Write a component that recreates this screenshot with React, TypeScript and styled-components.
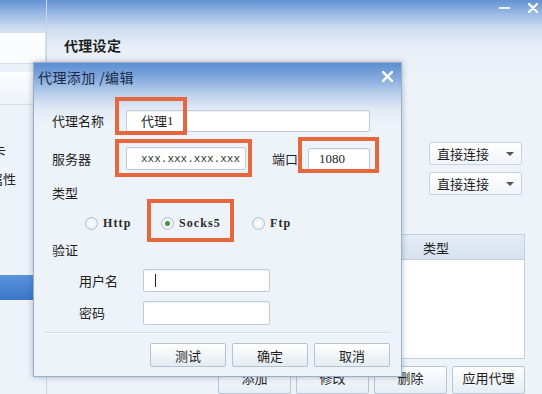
import styled, { createGlobalStyle } from "styled-components";

const GlobalStyle = createGlobalStyle`
	html, body {
		margin: 0;
		padding: 0;
		overflow: hidden;
	}

	body {
		font-family: "Noto Sans CJK SC", "Noto Sans", sans-serif;
		color: #1e1e1e;
	}
`;

const ORANGE = "#e6673b";

const Window = styled.div`
	position: relative;
	width: 542px;
	height: 394px;
	overflow: hidden;
	display: flex;
	background: linear-gradient(
		180deg,
		#6391d2 0px,
		#94b5e2 12px,
		#cddcf0 28px,
		#e8eef7 46px,
		#eef3f9 80px
	);
`;

const WindowControls = styled.div`
	position: absolute;
	top: 0;
	right: 4px;
	display: flex;
	align-items: center;
	gap: 18px;
	height: 16px;
`;

const Minimize = styled.span`
	width: 11px;
	height: 2px;
	background: #ffffff;
	opacity: 0.85;
`;

const CloseGlyph = styled.svg`
	width: ${({ width }) => width}px;
	height: ${({ height }) => height}px;
`;

/* ---------- sidebar ---------- */

const Sidebar = styled.div`
	width: 47px;
	flex-shrink: 0;
	padding-top: 32px;
	display: flex;
	flex-direction: column;
	border-right: 1px solid #c9d5e3;
	box-sizing: border-box;
	overflow: hidden;
`;

const SideHead = styled.div`
	height: 30px;
	background: #fafcfe;
	border: 1px solid #d6e0eb;
	border-left: none;
`;

const SideTab = styled.div`
	height: 32px;
	margin-top: 8px;
	background: linear-gradient(180deg, #fbfdff, #eef3f9);
	border-bottom: 1px solid #d6e0eb;
`;

const SideText = styled.div<{ $indent: number; $top: number }>`
	margin-top: ${({ $top }) => $top}px;
	margin-left: ${({ $indent }) => $indent}px;
	font-size: 13px;
	line-height: 16px;
	white-space: nowrap;
	color: #222;
`;

const SideSelected = styled.div`
	margin-top: 88px;
	height: 25px;
	background: linear-gradient(180deg, #5b93dc, #3a76c9);
`;

/* ---------- main panel ---------- */

const Main = styled.div`
	flex: 1;
	display: flex;
	flex-direction: column;
	padding: 37px 17px 0 17px;
`;

const Heading = styled.div`
	font-size: 14px;
	font-weight: bold;
	line-height: 17px;
	letter-spacing: 0.3px;
`;

const DropStack = styled.div`
	margin-top: 88px;
	display: flex;
	flex-direction: column;
	align-items: flex-end;
	gap: 7px;
	padding-right: 3px;
`;

const Dropdown = styled.div`
	width: 93px;
	height: 23px;
	box-sizing: border-box;
	display: flex;
	align-items: center;
	justify-content: space-between;
	padding: 0 7px 0 7px;
	font-size: 13px;
	background: linear-gradient(180deg, #ffffff, #f1f4f8);
	border: 1px solid #c9d2de;
	border-radius: 2px;
`;

const Caret = styled.span`
	width: 0;
	height: 0;
	border-left: 4px solid transparent;
	border-right: 4px solid transparent;
	border-top: 4px solid #555;
`;

const Table = styled.div`
	margin-top: 39px;
	height: 132px;
	display: flex;
	flex-direction: column;
	background: #ffffff;
	border: 1px solid #c3cfdd;
	box-sizing: border-box;
`;

const TableHead = styled.div`
	height: 24px;
	display: flex;
	justify-content: flex-end;
	align-items: center;
	background: linear-gradient(180deg, #e4ecf6, #d7e2ef);
	border-bottom: 1px solid #c3cfdd;
	font-size: 13px;
`;

const HeadCell = styled.div`
	width: 123px;
	padding-left: 22px;
	box-sizing: border-box;
`;

const ActionRow = styled.div`
	margin-top: 7px;
	display: flex;
	justify-content: flex-end;
	gap: 5px;
`;

const ActionButton = styled.div`
	width: 73px;
	height: 28px;
	box-sizing: border-box;
	padding-top: 1px;
	text-align: center;
	font-size: 13px;
	background: linear-gradient(180deg, #fdfeff, #e7edf4);
	border: 1px solid #b9c5d3;
	border-radius: 2px;
`;

/* ---------- dialog ---------- */

const Dialog = styled.div`
	position: absolute;
	left: 33px;
	top: 62px;
	width: 369px;
	height: 315px;
	box-sizing: border-box;
	display: flex;
	flex-direction: column;
	border: 1px solid #98afc9;
	box-shadow: 0 0 6px rgba(40, 60, 90, 0.35);
	background: linear-gradient(
		180deg,
		#5c8ed1 0px,
		#81a7dc 14px,
		#b7cdeb 30px,
		#e2eaf6 46px,
		#eef3f9 62px
	);
`;

const DialogTitle = styled.div`
	height: 31px;
	box-sizing: border-box;
	display: flex;
	align-items: center;
	justify-content: space-between;
	padding: 0 8px 4px 4px;
	font-size: 14px;
	color: #1b2b47;
	letter-spacing: 0.4px;
`;

const DialogBody = styled.div`
	display: flex;
	flex-direction: column;
	padding: 0 11px 0 18px;
`;

const Row = styled.div<{ $top: number; $indent?: number }>`
	display: flex;
	align-items: center;
	margin-top: ${({ $top }) => $top}px;
	padding-left: ${({ $indent }) => $indent || 0}px;
`;

const Label = styled.div<{ $width?: number }>`
	width: ${({ $width }) => ($width ? `${$width}px` : "auto")};
	flex-shrink: 0;
	font-size: 13px;
	line-height: 16px;
	white-space: nowrap;
`;

const PortLabel = styled(Label)`
	margin-left: 26px;
	width: 36px;
`;

const Input = styled.div<{ $width: number; $height?: number; $pad?: number }>`
	width: ${({ $width }) => $width}px;
	height: ${({ $height }) => $height || 23}px;
	box-sizing: border-box;
	display: flex;
	align-items: center;
	padding-left: ${({ $pad }) => $pad ?? 14}px;
	background: #ffffff;
	border: 1px solid #bfcbd9;
	border-radius: 2px;
	box-shadow: inset 0 1px 1px rgba(0, 0, 0, 0.06);
	font-size: 13px;
	line-height: 16px;
`;

const SerifNum = styled.span`
	font-family: "Liberation Serif", "DejaVu Serif", serif;
	font-size: 13px;
	line-height: 16px;
	color: #222;
`;

const MonoText = styled.span`
	font-family: "Liberation Mono", "DejaVu Sans Mono", monospace;
	font-size: 11px;
	line-height: 14px;
	color: #333;
`;

const TextCursor = styled.span`
	width: 1px;
	height: 13px;
	background: #222;
	margin-left: -3px;
`;

const RadioGroup = styled.div`
	display: flex;
	align-items: center;
	height: 14px;
	padding-left: 33px;
`;

const RadioItem = styled.div<{ $width: number }>`
	width: ${({ $width }) => $width}px;
	height: 14px;
	display: flex;
	align-items: center;
	gap: 5px;
`;

const RadioDot = styled.span<{ $checked?: boolean }>`
	width: 13px;
	height: 13px;
	box-sizing: border-box;
	border-radius: 50%;
	border: 1px solid #b3bfcc;
	background: radial-gradient(circle, #ffffff 0%, #e3e8ef 100%);
	display: flex;
	align-items: center;
	justify-content: center;

	&::after {
		content: "";
		display: ${({ $checked }) => ($checked ? "block" : "none")};
		width: 5px;
		height: 5px;
		border-radius: 50%;
		background: #4c8f4a;
	}
`;

const RadioText = styled.span`
	font-family: "Liberation Serif", "DejaVu Serif", serif;
	font-weight: bold;
	font-size: 12px;
	line-height: 14px;
	letter-spacing: 1.1px;
	color: #2a2a2a;
`;

const Separator = styled.div`
	margin: 7px 0 0 -8px;
	height: 1px;
	background: #d3dce7;
	border-bottom: 1px solid #fbfcfe;
`;

const ButtonRow = styled.div`
	margin-top: 9px;
	display: flex;
	justify-content: flex-end;
	gap: 6px;
`;

const DialogButton = styled.div`
	width: 76px;
	height: 24px;
	box-sizing: border-box;
	display: flex;
	align-items: center;
	justify-content: center;
	font-size: 13px;
	background: linear-gradient(180deg, #ffffff, #e5ebf2);
	border: 1px solid #b6c2d0;
	border-radius: 2px;
`;

/* annotation boxes drawn on top of the screenshot */
const Mark = styled.div<{ $x: number; $y: number; $w: number; $h: number }>`
	position: absolute;
	left: ${({ $x }) => $x}px;
	top: ${({ $y }) => $y}px;
	width: ${({ $w }) => $w}px;
	height: ${({ $h }) => $h}px;
	box-sizing: border-box;
	border: 4px solid ${ORANGE};
	pointer-events: none;
`;

function CrossIcon({ size = 10 }: { size?: number }) {
	return (
		<CloseGlyph width={size} height={size} viewBox="0 0 10 10">
			<path d="M1 1 L9 9 M9 1 L1 9" stroke="#ffffff" strokeWidth="2.2" strokeLinecap="round" />
		</CloseGlyph>
	);
}

type TRadioProps = { label: string; width: number; checked?: boolean };

function Radio({ label, width, checked }: TRadioProps) {
	return (
		<RadioItem $width={width}>
			<RadioDot $checked={checked} />
			<RadioText>{label}</RadioText>
		</RadioItem>
	);
}

function ProxyDialog() {
	return (
		<Dialog>
			<DialogTitle>
				<span>代理添加 /编辑</span>
				<CrossIcon size={11} />
			</DialogTitle>

			<DialogBody>
				<Row $top={16}>
					<Label $width={74}>代理名称</Label>
					<Input $width={244} $height={22}>
						代理<SerifNum>1</SerifNum>
					</Input>
				</Row>

				<Row $top={15}>
					<Label $width={74}>服务器</Label>
					<Input $width={120}>
						<MonoText>xxx.xxx.xxx.xxx</MonoText>
					</Input>
					<PortLabel>端口</PortLabel>
					<Input $width={62} $height={22} $pad={10}>
						<SerifNum>1080</SerifNum>
					</Input>
				</Row>

				<Row $top={15}>
					<Label>类型</Label>
				</Row>

				<Row $top={15}>
					<RadioGroup>
						<Radio label="Http" width={76} />
						<Radio label="Socks5" width={91} checked />
						<Radio label="Ftp" width={60} />
					</RadioGroup>
				</Row>

				<Row $top={12}>
					<Label>验证</Label>
				</Row>

				<Row $top={11} $indent={27}>
					<Label $width={64}>用户名</Label>
					<Input $width={127}>
						<TextCursor />
					</Input>
				</Row>

				<Row $top={9} $indent={27}>
					<Label $width={64}>密码</Label>
					<Input $width={127} $height={24} />
				</Row>

				<Separator />

				<ButtonRow>
					<DialogButton>测试</DialogButton>
					<DialogButton>确定</DialogButton>
					<DialogButton>取消</DialogButton>
				</ButtonRow>
			</DialogBody>
		</Dialog>
	);
}

function App() {
	return (
		<>
			<GlobalStyle />
			<Window>
				<Sidebar>
					<SideHead />
					<SideTab />
					<SideText $indent={-20} $top={38}>网卡</SideText>
					<SideText $indent={-10} $top={12}>属性</SideText>
					<SideSelected />
				</Sidebar>

				<Main>
					<Heading>代理设定</Heading>

					<DropStack>
						<Dropdown>
							直接连接
							<Caret />
						</Dropdown>
						<Dropdown>
							直接连接
							<Caret />
						</Dropdown>
					</DropStack>

					<Table>
						<TableHead>
							<HeadCell>类型</HeadCell>
						</TableHead>
					</Table>

					<ActionRow>
						<ActionButton>添加</ActionButton>
						<ActionButton>修改</ActionButton>
						<ActionButton>删除</ActionButton>
						<ActionButton>应用代理</ActionButton>
					</ActionRow>
				</Main>

				<WindowControls>
					<Minimize />
					<CrossIcon size={10} />
				</WindowControls>

				<ProxyDialog />

				<Mark $x={115} $y={97} $w={72} $h={38} />
				<Mark $x={115} $y={139} $w={137} $h={38} />
				<Mark $x={298} $y={137} $w={81} $h={36} />
				<Mark $x={147} $y={199} $w={87} $h={43} />
			</Window>
		</>
	);
}

export default App;
